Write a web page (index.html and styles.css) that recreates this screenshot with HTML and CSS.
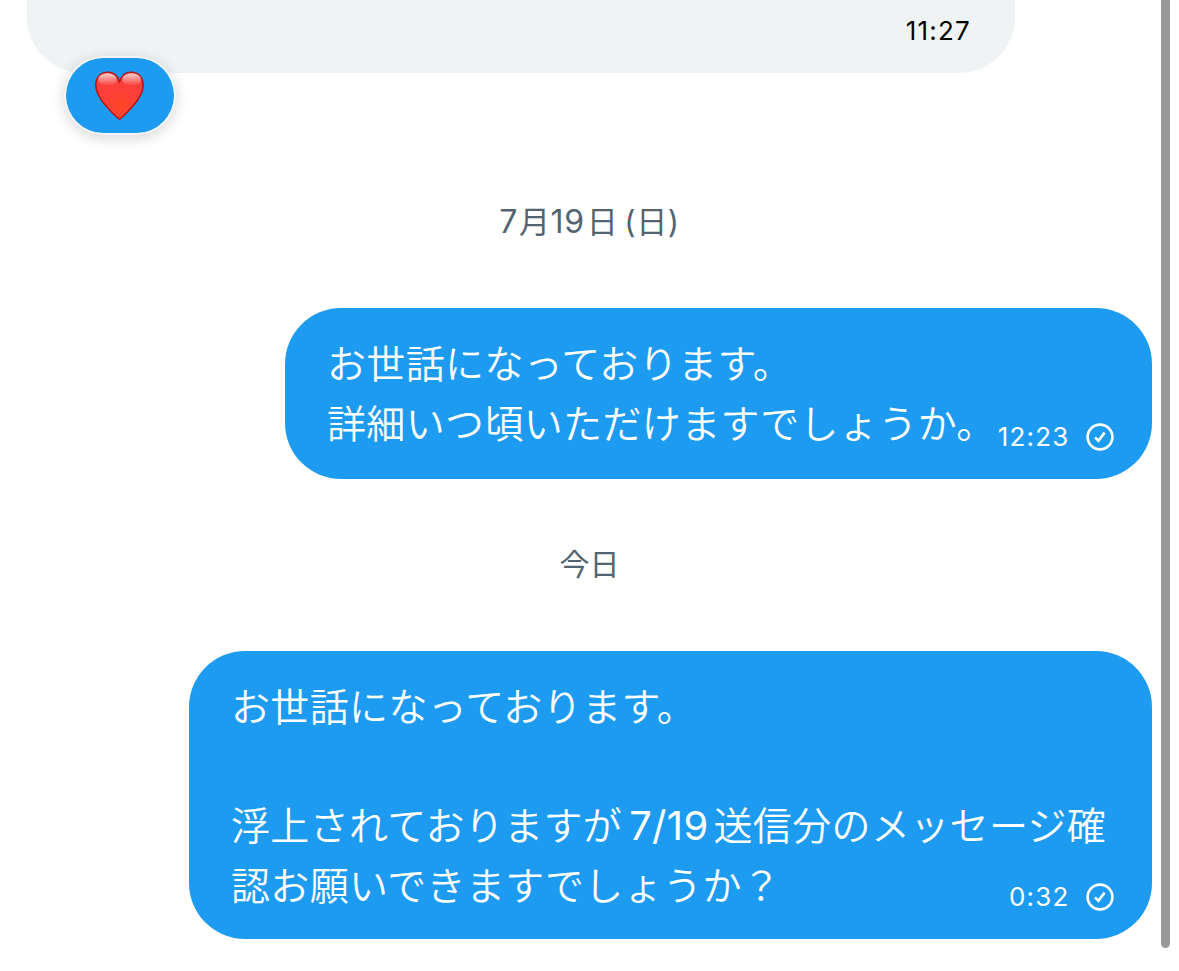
FILE: index.html
```
<!DOCTYPE html>
<html lang="ja">
<head>
    <meta charset="UTF-8">
    <meta name="viewport" content="width=device-width, initial-scale=1.0">
    <title>メッセージ</title>
    <link rel="stylesheet" href="styles.css">
</head>
<body>
    <div class="thread">
        <div class="bubble received">
            <span class="time">11:27</span>
            <div class="reaction">
                <svg width="50" height="50" viewBox="0 0 50 50">
                    <defs>
                        <radialGradient id="heartFill" cx="0.53" cy="0.7" r="0.68">
                            <stop offset="0" stop-color="#ff4527"/>
                            <stop offset="0.5" stop-color="#fd4038"/>
                            <stop offset="1" stop-color="#f5403c"/>
                        </radialGradient>
                        <linearGradient id="heartShine" x1="0" y1="0" x2="0" y2="1">
                            <stop offset="0" stop-color="#fff" stop-opacity="0.75"/>
                            <stop offset="1" stop-color="#fff" stop-opacity="0"/>
                        </linearGradient>
                    </defs>
                    <path d="M24.5 48.5C22.5 46.8 17 42 11 35C4.5 27.5 0.8 21 0.8 14.2C0.8 6.2 5.8 1.2 12.8 1.2C18.5 1.2 22.5 4.8 24.5 10.5C26.5 4.8 30.5 1.2 36.2 1.2C43.2 1.2 48.2 6.2 48.2 14.2C48.2 21 44.5 27.5 38 35C32 42 26.5 46.8 24.5 48.5Z" fill="url(#heartFill)" stroke="#b5171c" stroke-width="1.6"/>
                    <ellipse cx="12.4" cy="8.4" rx="9.4" ry="6.2" fill="url(#heartShine)"/>
                    <ellipse cx="36.6" cy="8.4" rx="9.4" ry="6.2" fill="url(#heartShine)"/>
                </svg>
            </div>
        </div>

        <div class="date date-first">7<span class="kanji">月</span>19<span class="kanji day">日</span><span class="weekday">(日)</span></div>

        <div class="bubble sent sent-short">
            <p class="text">お世話になっております。<br>詳細いつ頃いただけますでしょうか。</p>
            <div class="meta">
                <span class="time">12:23</span>
                <svg class="check" viewBox="0 0 28 28">
                    <circle cx="14" cy="14" r="12.4"/>
                    <path d="M9 14.4L12.4 17.7L18.6 9.6"/>
                </svg>
            </div>
        </div>

        <div class="date">今日</div>

        <div class="bubble sent sent-long">
            <p class="text">お世話になっております。<br><br>浮上されておりますが<span class="num">7/19</span>送信分のメッセージ確<br>認お願いできますでしょうか？</p>
            <div class="meta">
                <span class="time">0:32</span>
                <svg class="check" viewBox="0 0 28 28">
                    <circle cx="14" cy="14" r="12.4"/>
                    <path d="M9 14.4L12.4 17.7L18.6 9.6"/>
                </svg>
            </div>
        </div>
    </div>
    <div class="scrollbar"></div>
</body>
</html>
```
FILE: styles.css
```
* {
    margin: 0;
    padding: 0;
    box-sizing: border-box;
}

body {
    position: relative;
    height: 971px;
    overflow: hidden;
    background: #fff;
    font-family: Inter, "Noto Sans CJK JP", sans-serif;
}

.thread {
    display: flex;
    flex-direction: column;
    padding: 0 27px;
}

.bubble {
    position: relative;
    display: flex;
    border-radius: 56px;
}

.time {
    font-size: 26px;
    line-height: 32px;
    letter-spacing: 1.2px;
    white-space: nowrap;
}

.received {
    width: 988px;
    height: 73px;
    padding: 15px 44px 0 0;
    justify-content: flex-end;
    border-radius: 0 0 56px 56px;
    background: #eff3f4;
    color: #000;
}

.reaction {
    position: absolute;
    left: 39px;
    top: 58px;
    width: 108px;
    height: 75px;
    display: flex;
    align-items: center;
    justify-content: center;
    border-radius: 40px;
    background: #1d9bf0;
    box-shadow: 0 0 0 2px rgba(255, 255, 255, 0.6), 0 3px 14px 2px rgba(0, 0, 0, 0.17);
}

.date {
    height: 172px;
    line-height: 170px;
    text-align: center;
    font-size: 30px;
    color: #536471;
}

.date-first {
    height: 235px;
    line-height: 297px;
    font-size: 32px;
    letter-spacing: 0.6px;
}

.kanji {
    margin-left: 1px;
    font-size: 31px;
}

.day {
    margin-left: 2px;
}

.weekday {
    margin-left: 6px;
    font-size: 31px;
}

.sent {
    align-self: flex-end;
    justify-content: space-between;
    align-items: flex-start;
    padding: 26px 38px 0 42px;
    background: #1d9bf0;
    color: #fff;
}

.sent-short {
    width: 867px;
    height: 171px;
}

.sent-long {
    width: 963px;
    height: 288px;
}

.text {
    font-size: 39px;
    font-weight: 350;
    line-height: 59.5px;
    letter-spacing: 0.35px;
    white-space: nowrap;
}

.num {
    margin: 0 5px 0 7px;
    font-size: 40px;
    font-weight: 400;
    line-height: 1;
    letter-spacing: 0.3px;
}

.meta {
    position: absolute;
    right: 38.5px;
    bottom: 26px;
    display: flex;
    align-items: center;
    gap: 16px;
}

.check {
    width: 28px;
    height: 28px;
    fill: none;
    stroke: #fff;
    stroke-width: 2.6;
}

.scrollbar {
    position: absolute;
    top: 0;
    right: 9px;
    width: 9px;
    height: 948px;
    border-radius: 0 0 5px 5px;
    background: #999;
}
```
